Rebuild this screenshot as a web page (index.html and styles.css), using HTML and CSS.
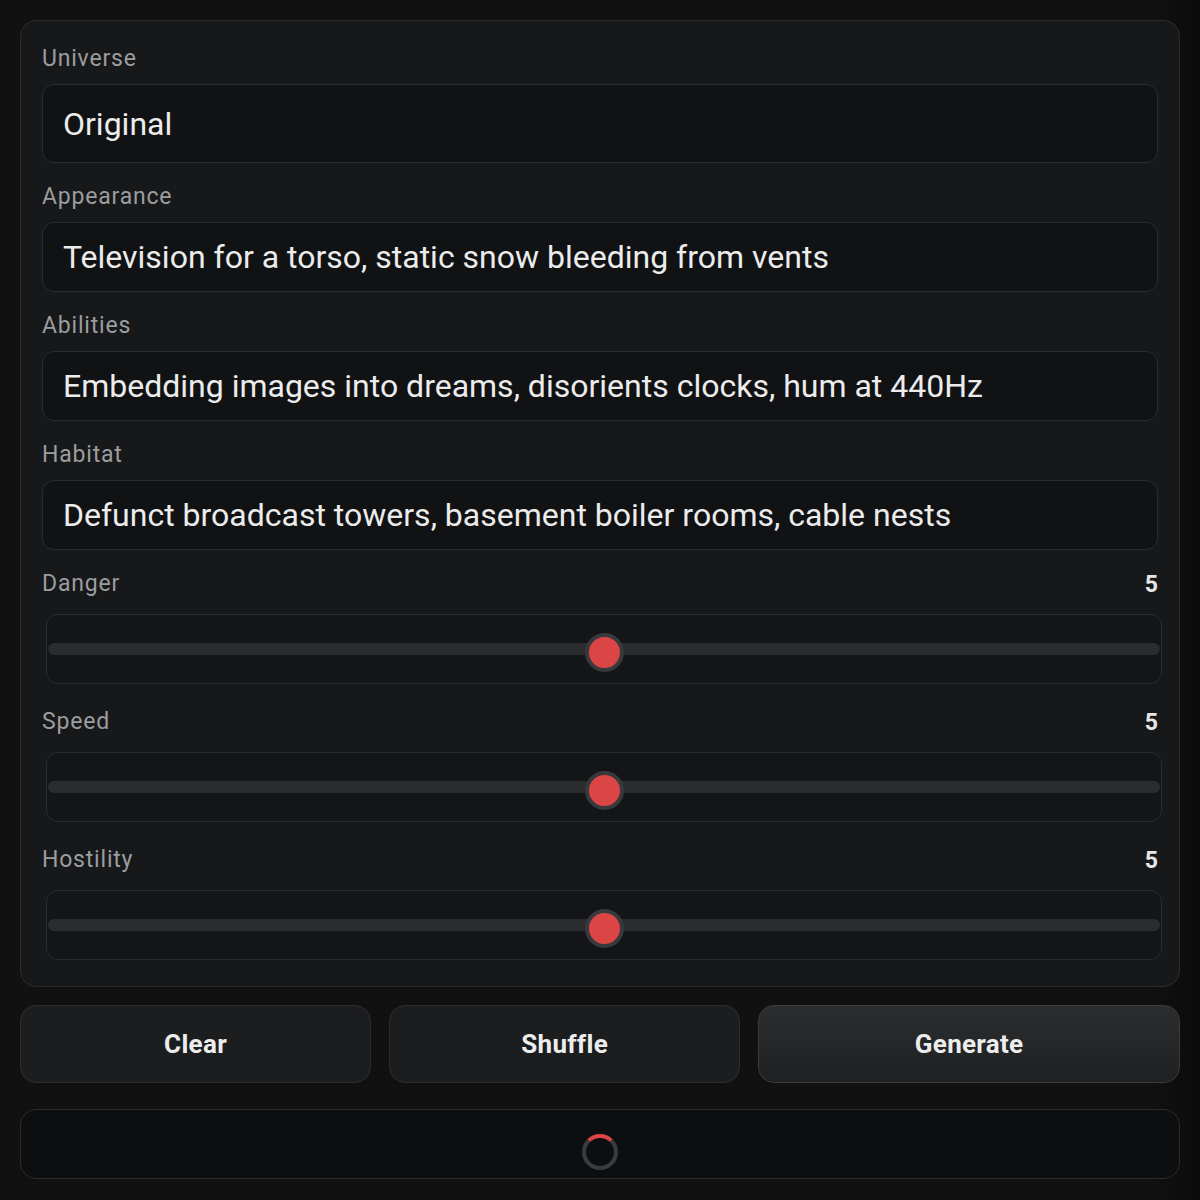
FILE: index.html
```html
<!DOCTYPE html>
<html lang="en">
<head>
    <meta charset="UTF-8">
    <meta name="viewport" content="width=device-width, initial-scale=1.0">
    <title>Creature Generator</title>
    <link rel="stylesheet" href="styles.css">
</head>
<body>
    <div class="panel">
        <div class="field">
            <label class="label" for="universe">Universe</label>
            <input id="universe" class="input input-tall" type="text" value="Original">
        </div>
        <div class="field">
            <label class="label" for="appearance">Appearance</label>
            <input id="appearance" class="input" type="text" value="Television for a torso, static snow bleeding from vents">
        </div>
        <div class="field">
            <label class="label" for="abilities">Abilities</label>
            <input id="abilities" class="input" type="text" value="Embedding images into dreams, disorients clocks, hum at 440Hz">
        </div>
        <div class="field">
            <label class="label" for="habitat">Habitat</label>
            <input id="habitat" class="input" type="text" value="Defunct broadcast towers, basement boiler rooms, cable nests">
        </div>
        <div class="field slider-field">
            <div class="slider-head">
                <label class="label" for="danger">Danger</label>
                <span class="value">5</span>
            </div>
            <div class="slider-box">
                <input id="danger" class="range" type="range" min="0" max="10" value="5">
            </div>
        </div>
        <div class="field slider-field">
            <div class="slider-head">
                <label class="label" for="speed">Speed</label>
                <span class="value">5</span>
            </div>
            <div class="slider-box">
                <input id="speed" class="range" type="range" min="0" max="10" value="5">
            </div>
        </div>
        <div class="field slider-field">
            <div class="slider-head">
                <label class="label" for="hostility">Hostility</label>
                <span class="value">5</span>
            </div>
            <div class="slider-box">
                <input id="hostility" class="range" type="range" min="0" max="10" value="5">
            </div>
        </div>
    </div>

    <div class="actions">
        <button class="btn">Clear</button>
        <button class="btn">Shuffle</button>
        <button class="btn primary">Generate</button>
    </div>

    <div class="output">
        <div class="spinner"></div>
    </div>
</body>
</html>
```

FILE: styles.css
```css
html {
    background-color: #101011;
}

body {
    margin: 0;
    padding: 20px;
    background: linear-gradient(90deg, #111112 0%, #111112 96%, #0b0b0b 100%);
    font-family: Roboto, "Noto Sans", sans-serif;
    color: #ececec;
    min-height: 1160px;
}

.panel {
    background-color: #17181a;
    border: 1px solid #2a2b2e;
    border-radius: 16px;
    padding: 24px 21px 26px;
}

.field {
    display: flex;
    flex-direction: column;
    margin-bottom: 20px;
}

.field:last-child {
    margin-bottom: 0;
}

.label {
    font-size: 23px;
    line-height: 28px;
    letter-spacing: 0.8px;
    color: #9c9d9f;
    margin-bottom: 11px;
}

.input {
    box-sizing: border-box;
    height: 70px;
    padding: 0 20px;
    background-color: #111214;
    border: 1px solid #2b2c2f;
    border-radius: 12px;
    color: #ececec;
    font-family: Roboto, "Noto Sans", sans-serif;
    font-size: 32px;
    outline: none;
}

.input-tall {
    height: 79px;
}

.slider-field {
    margin-bottom: 24px;
}

.slider-head {
    display: flex;
    justify-content: space-between;
    align-items: center;
    margin-bottom: 16px;
}

.slider-head .label {
    margin-bottom: 0;
}

.value {
    font-size: 23px;
    font-weight: 700;
    color: #e6e6e6;
}

.slider-box {
    box-sizing: border-box;
    height: 70px;
    margin-left: 4px;
    margin-right: -4px;
    background-color: #141517;
    border: 1px solid #2b2c2f;
    border-radius: 12px;
    display: flex;
    align-items: center;
}

.range {
    -webkit-appearance: none;
    appearance: none;
    width: 100%;
    height: 68px;
    margin: 0 1px;
    background: transparent;
}

.range::-webkit-slider-runnable-track {
    height: 12px;
    border-radius: 6px;
    background-color: #2a2c2e;
}

.range::-webkit-slider-thumb {
    -webkit-appearance: none;
    width: 39px;
    height: 39px;
    margin-top: -10px;
    box-sizing: border-box;
    border-radius: 50%;
    background-color: #dc4545;
    border: 4px solid #38393c;
}

.actions {
    display: flex;
    gap: 18px;
    margin-top: 18px;
}

.btn {
    flex: 1;
    height: 78px;
    background-color: #1c1d1f;
    border: 1px solid #2c2d30;
    border-radius: 16px;
    color: #ededed;
    font-family: Roboto, "Noto Sans", sans-serif;
    font-size: 26px;
    font-weight: 700;
    letter-spacing: 0.3px;
    cursor: pointer;
}

.primary {
    flex: 1.21;
    background: linear-gradient(180deg, #2b2d2f 0%, #1f2022 100%);
    border-color: #3a3b3e;
}

.output {
    box-sizing: border-box;
    height: 70px;
    margin-top: 26px;
    background-color: #0d0e10;
    border: 1px solid #2a2b2e;
    border-radius: 16px;
    display: flex;
    justify-content: center;
    padding-top: 24px;
}

.spinner {
    box-sizing: border-box;
    width: 36px;
    height: 36px;
    border-radius: 50%;
    border: 4px solid #3a3b3e;
    border-top-color: #dc4545;
}
```
